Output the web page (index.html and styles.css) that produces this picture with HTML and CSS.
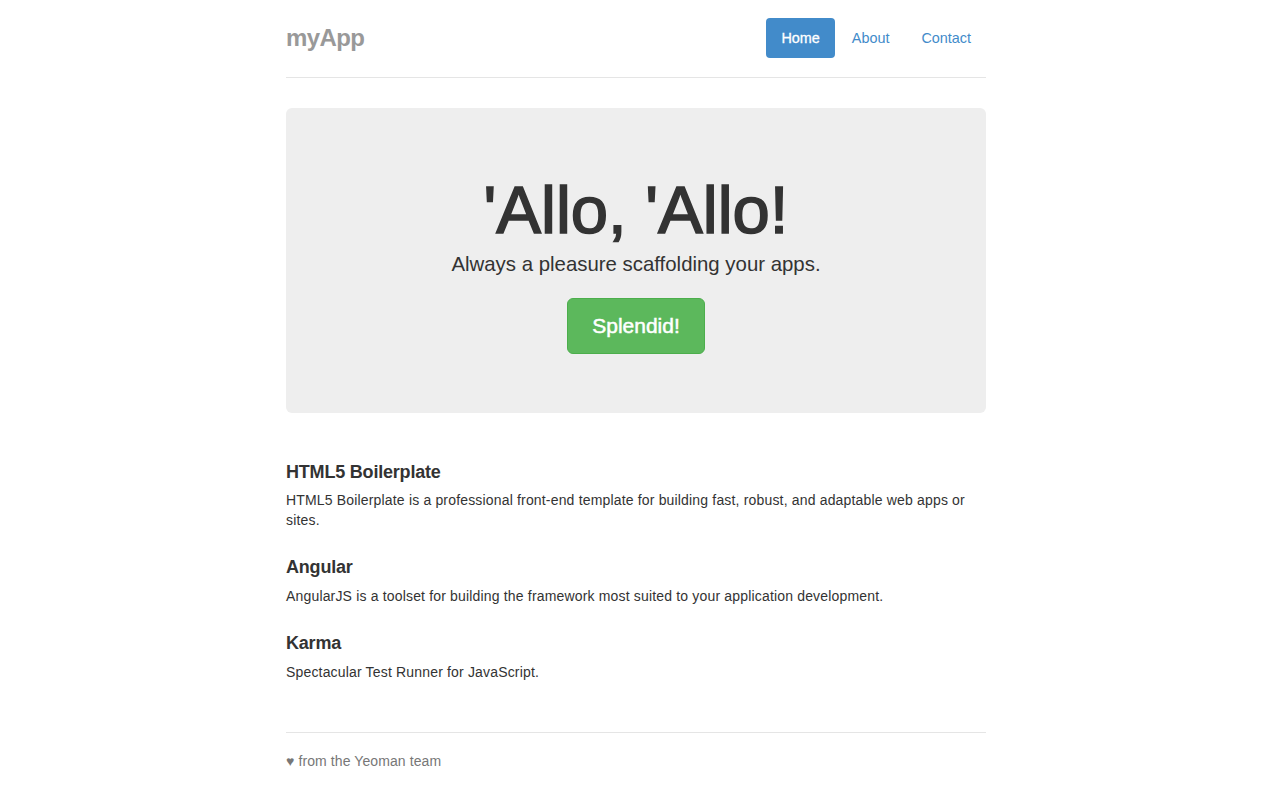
FILE: index.html
```html
<!DOCTYPE html>
<html lang="en">
<head>
<meta charset="utf-8">
<title>myApp</title>
<link rel="stylesheet" href="styles.css">
</head>
<body>
<div class="container">
  <header class="header">
    <h3 class="brand">myApp</h3>
    <nav class="nav">
      <a class="pill active" href="#">Home</a>
      <a class="pill" href="#">About</a>
      <a class="pill" href="#">Contact</a>
    </nav>
  </header>

  <section class="jumbotron">
    <h1 class="title">'Allo, 'Allo!</h1>
    <p class="lead">Always a pleasure scaffolding your apps.</p>
    <a class="btn-splendid" href="#">Splendid!</a>
  </section>

  <section class="marketing">
    <h4 class="m-title">HTML5 Boilerplate</h4>
    <p class="m-text">HTML5 Boilerplate is a professional front-end template for building fast, robust, and adaptable web apps or sites.</p>
    <h4 class="m-title">Angular</h4>
    <p class="m-text">AngularJS is a toolset for building the framework most suited to your application development.</p>
    <h4 class="m-title">Karma</h4>
    <p class="m-text">Spectacular Test Runner for JavaScript.</p>
  </section>

  <footer class="footer">
    <p class="footer-text">&#9829; from the Yeoman team</p>
  </footer>
</div>
</body>
</html>
```

FILE: styles.css
```css
* { box-sizing: border-box; }

html, body { background: #fff; }

body {
  margin: 0;
  padding: 18px 2px 20px 0;
  font-family: "Liberation Sans", Arial, Helvetica, sans-serif;
  font-size: 14px;
  line-height: 20px;
  color: #333;
}

.container {
  width: 700px;
  margin: 0 auto;
}

/* Header */
.header {
  display: flex;
  justify-content: space-between;
  align-items: flex-start;
  border-bottom: 1px solid #e5e5e5;
  padding-bottom: 19px;
}

.brand {
  margin: 0;
  font-size: 24px;
  line-height: 40px;
  font-weight: bold;
  color: #999;
  letter-spacing: -0.6px;
}

.nav {
  display: flex;
  gap: 2px;
}

.pill {
  display: block;
  padding: 10px 15px;
  line-height: 20px;
  font-size: 14.4px;
  border-radius: 4px;
  color: #428bca;
  text-decoration: none;
}

.pill.active {
  background: #428bca;
  color: #fff;
  -webkit-text-stroke: 0.3px #fff;
}

/* Jumbotron */
.jumbotron {
  margin-top: 30px;
  background: #eee;
  border-radius: 6px;
  padding: 48px 60px 59px;
  display: flex;
  flex-direction: column;
  align-items: center;
  text-align: center;
}

.title {
  margin: 17px 0 2px;
  font-size: 67px;
  line-height: 1.1;
  font-weight: normal;
  color: #333;
  -webkit-text-stroke: 1.6px #333;
}

.lead {
  margin: 0;
  font-size: 20.4px;
  line-height: 30px;
  font-weight: 300;
  color: #333;
}

.btn-splendid {
  margin-top: 19px;
  display: inline-block;
  padding: 12px 24px;
  font-size: 21px;
  line-height: 30px;
  color: #fff;
  background: #5cb85c;
  border: 1px solid #4cae4c;
  border-radius: 6px;
  text-decoration: none;
  -webkit-text-stroke: 0.5px #fff;
}

/* Marketing */
.marketing {
  padding-top: 50px;
  padding-bottom: 50px;
}

.m-title {
  margin: 28px 0 8px;
  font-size: 18px;
  line-height: 19.8px;
  font-weight: bold;
  letter-spacing: -0.2px;
  color: #333;
}

.m-title:first-child { margin-top: 0; }

.m-text {
  margin: 0;
  font-size: 14px;
  line-height: 20px;
  letter-spacing: 0.17px;
}

/* Footer */
.footer {
  border-top: 1px solid #e5e5e5;
  padding-top: 18px;
  color: #777;
}

.footer-text {
  margin: 0;
  line-height: 20px;
  letter-spacing: 0.1px;
}
```
